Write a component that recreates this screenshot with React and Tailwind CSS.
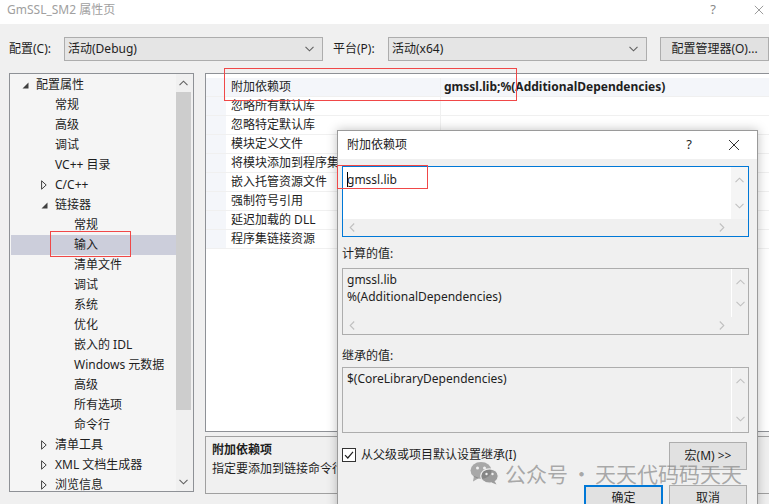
import React from "react";

const tree = [
  { t: "配置属性", lvl: 0, tri: "open" },
  { t: "常规", lvl: 1 },
  { t: "高级", lvl: 1 },
  { t: "调试", lvl: 1 },
  { t: "VC++ 目录", lvl: 1 },
  { t: "C/C++", lvl: 1, tri: "closed" },
  { t: "链接器", lvl: 1, tri: "open" },
  { t: "常规", lvl: 2 },
  { t: "输入", lvl: 2, sel: true },
  { t: "清单文件", lvl: 2 },
  { t: "调试", lvl: 2 },
  { t: "系统", lvl: 2 },
  { t: "优化", lvl: 2 },
  { t: "嵌入的 IDL", lvl: 2 },
  { t: "Windows 元数据", lvl: 2 },
  { t: "高级", lvl: 2 },
  { t: "所有选项", lvl: 2 },
  { t: "命令行", lvl: 2 },
  { t: "清单工具", lvl: 1, tri: "closed" },
  { t: "XML 文档生成器", lvl: 1, tri: "closed" },
  { t: "浏览信息", lvl: 1, tri: "closed" },
];

const props = [
  "附加依赖项",
  "忽略所有默认库",
  "忽略特定默认库",
  "模块定义文件",
  "将模块添加到程序集",
  "嵌入托管资源文件",
  "强制符号引用",
  "延迟加载的 DLL",
  "程序集链接资源",
];

const pads = ["pl-[25px]", "pl-[44px]", "pl-[63px]"];

function Chev({ dir, color = "#a6a6a6" }) {
  if (dir === "up" || dir === "down") {
    return (
      <svg width="9" height="6" viewBox="0 0 9 6">
        <path
          d={dir === "down" ? "M0.5 0.8L4.5 4.8L8.5 0.8" : "M0.5 5.2L4.5 1.2L8.5 5.2"}
          fill="none"
          stroke={color}
          strokeWidth="1.1"
        />
      </svg>
    );
  }
  return (
    <svg width="6" height="9" viewBox="0 0 6 9">
      <path
        d={dir === "left" ? "M5.2 0.5L1.2 4.5L5.2 8.5" : "M0.8 0.5L4.8 4.5L0.8 8.5"}
        fill="none"
        stroke={color}
        strokeWidth="1.1"
      />
    </svg>
  );
}

function Tri({ kind }) {
  if (kind === "open") {
    return (
      <svg width="7" height="7" viewBox="0 0 7 7">
        <path d="M6.5 0.5V6.5H0.5Z" fill="#404040" />
      </svg>
    );
  }
  return (
    <svg width="6" height="10" viewBox="0 0 6 10">
      <path d="M0.6 0.8L5.2 5L0.6 9.2Z" fill="none" stroke="#404040" strokeWidth="1" />
    </svg>
  );
}

function Combo({ text }) {
  return (
    <div className="shrink-0 w-[259px] h-[24px] border border-[#adadad] bg-[#e5e5e5] flex items-center justify-between pl-[3px] pr-[8px]">
      <span>{text}</span>
      <Chev dir="down" color="#606060" />
    </div>
  );
}

function XIcon({ size = 12, color = "#333" }) {
  return (
    <svg width={size} height={size} viewBox="0 0 12 12">
      <path d="M1 1L11 11M11 1L1 11" stroke={color} strokeWidth="1" />
    </svg>
  );
}

function TextBox({ lines, focused, hscroll, h, pt }) {
  return (
    <div
      className={`w-[407px] border flex flex-col ${h} ${
        focused ? "border-[#0078d7] bg-white" : "border-[#adadad] bg-[#f0f0f0]"
      }`}
    >
      <div className="flex flex-1 min-h-0">
        <div className={`flex-1 pl-[4px] leading-[17px] ${pt}`}>
          {lines.map((l, i) => (
            <div key={i} className="flex items-center">
              {focused && i === 0 && <span className="w-px h-[15px] bg-black -mr-px"></span>}
              {l}
            </div>
          ))}
        </div>
        <div
          className={`w-[17px] flex flex-col items-center justify-between py-[10px] ${
            focused ? "bg-[#f5f5f5]" : "bg-[#f0f0f0] border-l border-white"
          }`}
        >
          <Chev dir="up" color="#c0c0c0" />
          <Chev dir="down" color="#c0c0c0" />
        </div>
      </div>
      {hscroll && (
        <div className="h-[17px] flex bg-[#f0f0f0]">
          <div className="flex-1 flex items-center justify-between px-[6px]">
            <Chev dir="left" color="#c0c0c0" />
            <Chev dir="right" color="#c0c0c0" />
          </div>
          <div className="w-[17px]"></div>
        </div>
      )}
    </div>
  );
}

export default function App() {
  return (
    <div className="relative w-[769px] h-[504px] overflow-hidden bg-[#f0f0f0] text-[12px] text-[#1e1e1e] font-['Noto_Sans','Noto_Sans_CJK_SC',sans-serif]">
      {/* window title */}
      <div className="h-[24px] bg-white flex items-center justify-between pl-[7px] pr-[5px]">
        <span className="text-[#a0a0a0] text-[12px] -mt-[4px]">GmSSL_SM2 属性页</span>
        <div className="flex items-center gap-[38px] text-[#888] -mt-[4px]">
          <span className="text-[13px]">?</span>
          <XIcon size={10} color="#888" />
        </div>
      </div>

      {/* config row */}
      <div className="flex items-center h-[24px] mt-[13px] pl-[9px]">
        <span className="w-[55px] shrink-0">配置(C):</span>
        <Combo text="活动(Debug)" />
        <span className="ml-[10px] w-[55px] shrink-0">平台(P):</span>
        <Combo text="活动(x64)" />
        <div className="shrink-0 ml-[13px] w-[109px] h-[24px] border border-[#adadad] bg-[#e1e1e1] flex items-center justify-center">
          配置管理器(O)...
        </div>
      </div>

      {/* main area */}
      <div className="flex mt-[12px] pl-[9px]">
        {/* tree */}
        <div className="shrink-0 w-[185px] h-[419px] border border-[#8e9196] bg-[#f5f5f5] flex">
          <div className="flex-1 pt-px pl-px">
            {tree.map((it, i) => (
              <div
                key={i}
                className={`h-[20px] flex items-center ${pads[it.lvl]} ${it.sel ? "bg-[#cccedb]" : ""}`}
              >
                <span className="w-[14px] -ml-[14px] flex items-center">
                  {it.tri && <Tri kind={it.tri} />}
                </span>
                <span>{it.t}</span>
              </div>
            ))}
          </div>
          <div className="w-[17px] flex flex-col items-start bg-[#f0f0f0]">
            <div className="h-[18px] w-[15px] flex items-center justify-center">
              <Chev dir="up" color="#606060" />
            </div>
            <div className="w-[15px] h-[318px] bg-[#cdcdcd]"></div>
            <div className="flex-1"></div>
            <div className="h-[18px] w-[15px] flex items-center justify-center">
              <Chev dir="down" color="#606060" />
            </div>
          </div>
        </div>

        {/* right side */}
        <div className="shrink-0 ml-[11px] w-[580px] flex flex-col">
          <div className="h-[359px] border border-[#8e9196] bg-white pt-[4px]">
            {props.map((p, i) => (
              <div
                key={i}
                className={`h-[19px] flex border-b border-[#f0f0f0] ${i === 0 ? "bg-[#f4f6fa]" : ""}`}
              >
                <div className="w-[20px] bg-[#f4f6fa]"></div>
                <div className="w-[215px] pl-[5px] flex items-center border-r border-[#f0f0f0]">{p}</div>
                <div className="flex-1 pl-[3px] flex items-center font-bold">
                  {i === 0 ? "gmssl.lib;%(AdditionalDependencies)" : ""}
                </div>
              </div>
            ))}
          </div>
          <div className="mt-[4px] h-[58px] border border-[#a0a0a0] pl-[6px] pt-[3px] leading-[19px]">
            <div className="font-bold">附加依赖项</div>
            <div>指定要添加到链接命令行的附加项。[例如 kernel32.lib]</div>
          </div>
        </div>
      </div>

      {/* dialog */}
      <div className="absolute left-[337px] top-[130px] w-[421px] h-[390px] bg-[#f0f0f0] border border-[#9a9a9a] shadow-[0_0_10px_rgba(0,0,0,0.25)]">
        <div className="h-[28px] bg-white flex items-center justify-between pl-[9px] pr-[17px]">
          <span className="text-[#222]">附加依赖项</span>
          <div className="flex items-center gap-[36px]">
            <span className="text-[13px]">?</span>
            <XIcon size={12} color="#333" />
          </div>
        </div>
        <div className="pl-[4px]">
          <div className="mt-[7px]">
            <TextBox lines={["gmssl.lib"]} focused hscroll h="h-[71px]" pt="pt-[4px]" />
          </div>
          <div className="mt-[8px] h-[18px] flex items-center">计算的值:</div>
          <div className="mt-[5px]">
            <TextBox lines={["gmssl.lib", "%(AdditionalDependencies)"]} hscroll h="h-[67px]" pt="pt-[2px]" />
          </div>
          <div className="mt-[12px] h-[18px] flex items-center">继承的值:</div>
          <div className="mt-[2px]">
            <TextBox lines={["$(CoreLibraryDependencies)"]} h="h-[66px]" pt="pt-[2px]" />
          </div>
          <div className="flex items-start mt-[9px] w-[407px]">
            <div className="flex items-center mt-[4px]">
              <div className="w-[14px] h-[14px] border border-[#333] bg-white flex items-center justify-center">
                <svg width="10" height="10" viewBox="0 0 10 10">
                  <path d="M1 5.2L3.8 8L9 1.8" fill="none" stroke="#222" strokeWidth="1.2" />
                </svg>
              </div>
              <span className="ml-[5px]">从父级或项目默认设置继承(I)</span>
            </div>
            <div className="ml-auto mr-[2px] w-[78px] h-[28px] border border-[#adadad] bg-[#e1e1e1] flex items-center justify-center">
              宏(M) &gt;&gt;
            </div>
          </div>
          <div className="flex mt-[15px] w-[407px] justify-end gap-[6px] pr-[2px]">
            <div className="w-[79px] h-[26px] border-2 border-[#0078d7] bg-[#e1e1e1] flex items-center justify-center">
              确定
            </div>
            <div className="w-[78px] h-[26px] border border-[#adadad] bg-[#e1e1e1] flex items-center justify-center">
              取消
            </div>
          </div>
        </div>
      </div>

      {/* red highlight boxes */}
      <div className="absolute left-[50px] top-[231px] w-[81px] h-[26px] border border-[#f04848]"></div>
      <div className="absolute left-[224px] top-[68px] w-[293px] h-[33px] border border-[#f04848]"></div>
      <div className="absolute left-[337px] top-[165px] w-[91px] h-[24px] border border-[#f04848]"></div>

      {/* watermark */}
      <div className="absolute left-[470px] top-[460px] h-[26px] flex items-center text-[21px] leading-none text-[rgba(120,120,120,0.6)] font-['Noto_Sans_CJK_SC',sans-serif]">
        <svg width="29" height="24" viewBox="0 0 29 24">
          <ellipse cx="11" cy="9.5" rx="10.5" ry="8.5" fill="rgba(120,120,120,0.6)" />
          <path d="M4 15L3 20.5L9 17Z" fill="rgba(120,120,120,0.6)" />
          <circle cx="7.5" cy="7" r="1.5" fill="#f0f0f0" />
          <circle cx="14.5" cy="7" r="1.5" fill="#f0f0f0" />
          <ellipse cx="19.5" cy="15" rx="8.8" ry="7.2" fill="rgba(120,120,120,0.7)" stroke="#f0f0f0" strokeWidth="1.2" />
          <path d="M24.5 20L26.5 23.5L21.5 21.5Z" fill="rgba(120,120,120,0.7)" />
          <circle cx="16.5" cy="13" r="1.2" fill="#f0f0f0" />
          <circle cx="22.5" cy="13" r="1.2" fill="#f0f0f0" />
        </svg>
        <span className="ml-[6px]">公众号</span>
        <span className="ml-[3px]">·</span>
        <span className="ml-[3px]">天天代码码天天</span>
      </div>
    </div>
  );
}
